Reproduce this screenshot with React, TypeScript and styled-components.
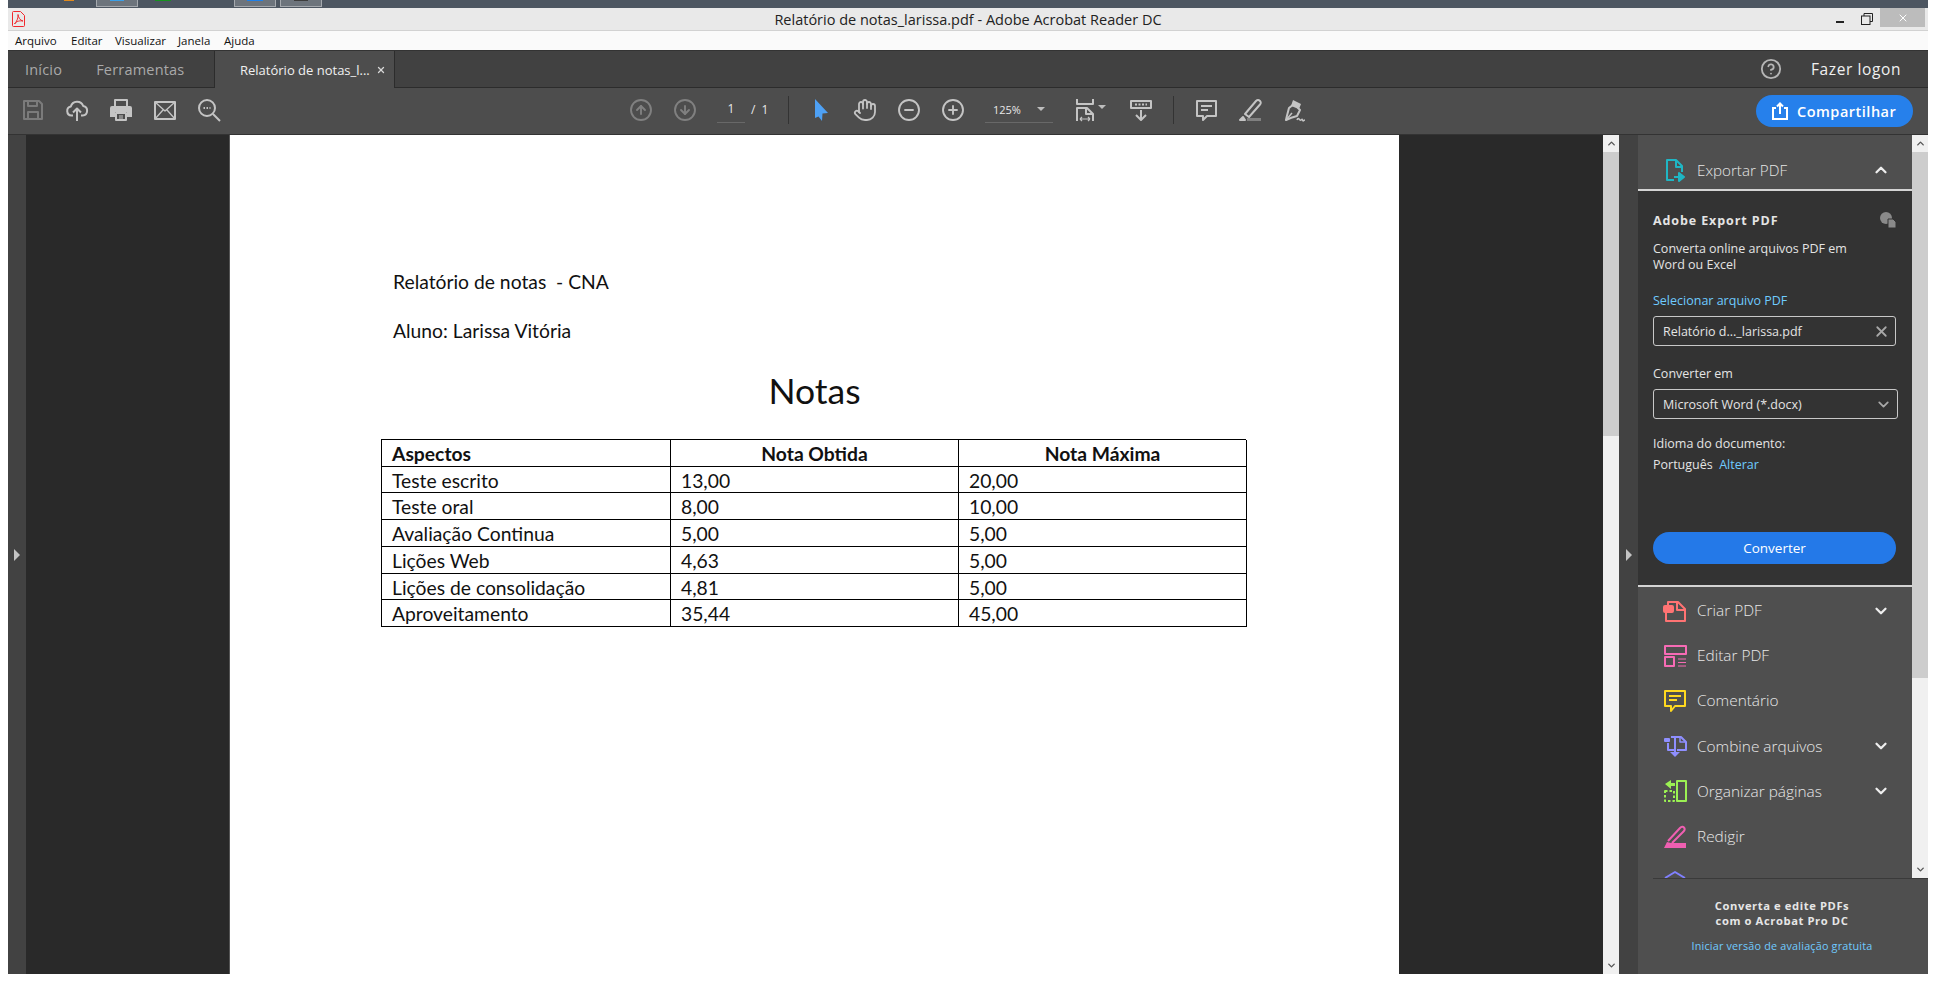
import React from "react";
import styled, { createGlobalStyle } from "styled-components";
import {
  CircleArrowDown,
  CircleArrowUp,
  CircleHelp,
  CircleMinus,
  CirclePlus,
  ChevronDown,
  ChevronUp,
  Hand,
  X,
} from "lucide-react";

const GlobalStyle = createGlobalStyle`
  html, body {
    margin: 0;
    padding: 0;
    background: #fff;
    overflow: hidden;
  }
  * {
    box-sizing: border-box;
  }
`;

const Screen = styled.div`
  width: 1936px;
  height: 982px;
  padding: 0 8px 8px;
  display: flex;
  flex-direction: column;
  font-family: "Open Sans", "Noto Sans", sans-serif;
`;

/* desktop taskbar peeking out above the window */
const TaskStrip = styled.div`
  height: 8px;
  flex: none;
  background: #4d5661;
  display: flex;
  align-items: flex-start;
  overflow: hidden;
`;

const TaskBit = styled.div<{ $left: number; $width: number; $color: string }>`
  margin-left: ${(p) => p.$left}px;
  width: ${(p) => p.$width}px;
  height: 1px;
  background: ${(p) => p.$color};
`;

const TaskButton = styled.div<{ $left: number }>`
  margin-left: ${(p) => p.$left}px;
  width: 42px;
  height: 7px;
  background: #6d747c;
  border: 1px solid #a5a9ae;
  border-top: none;
  display: flex;
  justify-content: center;
`;

const TitleBar = styled.div`
  height: 23px;
  flex: none;
  background: #e9e9e9;
  border-bottom: 1px solid #d2d2d2;
  display: grid;
  grid-template-columns: 1fr auto 1fr;
  align-items: center;
  color: #222;
`;

const AppIcon = styled.div`
  padding-left: 4px;
  display: flex;
  align-items: center;
`;

const TitleText = styled.div`
  font-size: 14.5px;
`;

const WindowControls = styled.div`
  display: flex;
  justify-content: flex-end;
  align-items: flex-start;
  height: 22px;
  padding-right: 3px;
`;

const WinButton = styled.div<{ $close?: boolean }>`
  width: ${(p) => (p.$close ? 45 : 27)}px;
  height: ${(p) => (p.$close ? 19 : 22)}px;
  background: ${(p) => (p.$close ? "#bcbcbc" : "transparent")};
  display: flex;
  align-items: center;
  justify-content: center;
`;

const MenuBar = styled.div`
  height: 20px;
  flex: none;
  background: #fafafa;
  border-bottom: 1px solid #333;
  display: flex;
  align-items: center;
  padding-left: 7px;
  font-size: 11.5px;
  color: #111;
`;

const MenuItem = styled.span<{ $w: number }>`
  width: ${(p) => p.$w}px;
`;

const TabBar = styled.div`
  height: 37px;
  flex: none;
  background: #414141;
  border-bottom: 1px solid #2c2c2c;
  display: flex;
  align-items: stretch;
  color: #f0f0f0;
`;

const HomeTabs = styled.div`
  width: 207px;
  border-right: 1px solid #2c2c2c;
  display: flex;
  align-items: center;
  padding-left: 17px;
  gap: 34px;
  color: #a9a9a9;
  font-size: 14.5px;
  letter-spacing: 0.2px;
`;

const DocTab = styled.div`
  width: 180px;
  margin-bottom: -1px;
  background: #4d4d4d;
  border-right: 1px solid #2c2c2c;
  display: flex;
  align-items: center;
  padding-left: 25px;
  gap: 6px;
  font-size: 13px;
`;

const TabRight = styled.div`
  margin-left: auto;
  display: flex;
  align-items: center;
  padding-right: 27px;
`;

const SignIn = styled.span`
  margin-left: 29px;
  font-size: 15.5px;
  letter-spacing: 0.6px;
  color: #f0f0f0;
`;

const Toolbar = styled.div`
  height: 47px;
  flex: none;
  background: #4d4d4d;
  border-bottom: 1px solid #333;
  display: flex;
  align-items: center;
  padding-left: 3px;
  padding-right: 15px;
  padding-bottom: 3px;
`;

const Tool = styled.div<{ $gap?: number }>`
  width: 44px;
  height: 26px;
  flex: none;
  margin-left: ${(p) => p.$gap ?? 0}px;
  display: flex;
  align-items: center;
  justify-content: center;
  color: #c4c4c4;
  position: relative;
`;

const ToolCaret = styled.span`
  position: absolute;
  right: 1px;
  top: 8px;
  border-left: 4px solid transparent;
  border-right: 4px solid transparent;
  border-top: 4px solid #bdbdbd;
`;

const PageInput = styled.div`
  margin-left: 10px;
  width: 28px;
  height: 26px;
  flex: none;
  border-bottom: 1px solid #686868;
  color: #e8e8e8;
  font-size: 12px;
  text-align: center;
  line-height: 24px;
`;

const PageTotal = styled.div`
  width: 43px;
  flex: none;
  padding-left: 6px;
  color: #e8e8e8;
  font-size: 12px;
  word-spacing: 3px;
`;

const ToolSep = styled.div<{ $gap?: number }>`
  width: 1px;
  height: 28px;
  flex: none;
  margin-left: ${(p) => p.$gap ?? 0}px;
  margin-right: 10px;
  background: #333;
`;

const ZoomBox = styled.div`
  margin-left: 10px;
  width: 68px;
  height: 26px;
  flex: none;
  border-bottom: 1px solid #686868;
  display: flex;
  align-items: center;
  justify-content: space-between;
  padding: 0 8px;
  color: #e8e8e8;
  font-size: 11px;
`;

const Caret = styled.span`
  border-left: 4px solid transparent;
  border-right: 4px solid transparent;
  border-top: 4px solid #bdbdbd;
`;

const ShareButton = styled.div`
  margin-left: auto;
  margin-top: 3px;
  width: 157px;
  height: 32px;
  border-radius: 16px;
  background: #2680eb;
  color: #fff;
  display: flex;
  align-items: center;
  padding-left: 15px;
  gap: 8px;
  font-size: 14.5px;
  font-weight: 600;
  letter-spacing: 0.5px;
`;

const Workspace = styled.div`
  flex: 1;
  min-height: 0;
  display: flex;
`;

const Rail = styled.div<{ $w: number }>`
  width: ${(p) => p.$w}px;
  flex: none;
  background: #424242;
  display: flex;
  align-items: center;
  justify-content: center;
`;

const RailArrow = styled.span`
  border-top: 6px solid transparent;
  border-bottom: 6px solid transparent;
  border-left: 6px solid #c4c4c4;
`;

const DocView = styled.div`
  width: 1577px;
  flex: none;
  background: #292929;
  padding-left: 203px;
  overflow: hidden;
`;

const Page = styled.div`
  width: 1170px;
  height: 100%;
  background: #fff;
  border-left: 1px solid #555;
  padding: 133px 0 0 163px;
  color: #111;
  font-family: Lato, "Open Sans", sans-serif;
`;

const DocLine = styled.div`
  font-size: 19.3px;
  height: 49px;
  line-height: 28px;
`;

const DocTitle = styled.div`
  width: 836px;
  margin-top: 2px;
  height: 71px;
  padding-left: 7px;
  text-align: center;
  font-size: 35.5px;
  line-height: 46px;
`;

const GradeTable = styled.div`
  margin-left: -12px;
  width: 865px;
  display: grid;
  grid-template-columns: 289px 288px 288px;
  grid-auto-rows: 26.71px;
  border-top: 1.5px solid #000;
  border-left: 1.5px solid #000;
  font-size: 19.3px;
`;

const Cell = styled.div<{ $head?: boolean; $center?: boolean }>`
  border-right: 1.5px solid #000;
  border-bottom: 1.5px solid #000;
  padding-left: ${(p) => (p.$center ? 0 : 10)}px;
  line-height: 27px;
  font-weight: ${(p) => (p.$head ? 700 : 400)};
  text-align: ${(p) => (p.$center ? "center" : "left")};
  white-space: nowrap;
`;

const ScrollBar = styled.div<{ $h: number }>`
  width: 16px;
  height: ${(p) => p.$h}px;
  flex: none;
  background: #f0f0f0;
  display: flex;
  flex-direction: column;
  color: #555;
`;

const ScrollButton = styled.div`
  height: 17px;
  flex: none;
  display: flex;
  align-items: center;
  justify-content: center;
`;

const ScrollThumb = styled.div<{ $h: number }>`
  height: ${(p) => p.$h}px;
  background: #cdcdcd;
  flex: none;
`;

const ScrollTrack = styled.div`
  flex: 1;
`;

const ToolsPane = styled.div`
  flex: 1;
  min-width: 0;
  display: flex;
  flex-direction: column;
  background: #4f4f4f;
`;

const PaneTop = styled.div`
  height: 743px;
  flex: none;
  display: flex;
`;

const PaneScroll = styled.div`
  flex: 1;
  min-width: 0;
  overflow: hidden;
`;

const SectionHead = styled.div`
  height: 56px;
  border-bottom: 2px solid #d4d4d4;
  display: flex;
  align-items: center;
  padding: 15px 22px 0 25px;
  color: #e6e6e6;
  font-size: 15.2px;
  font-weight: 300;
`;

const ItemLabel = styled.span`
  margin-left: 10px;
  flex: 1;
`;

const ExportBox = styled.div`
  height: 396px;
  background: #333;
  border-bottom: 2px solid #d4d4d4;
  padding: 20px 15px 0;
  color: #e4e4e4;
  font-size: 12.5px;
  display: flex;
  flex-direction: column;
`;

const ExportTitle = styled.div`
  display: flex;
  justify-content: space-between;
  align-items: center;
  font-size: 12.5px;
  font-weight: 700;
  letter-spacing: 0.9px;
  height: 18px;
  margin-bottom: 12px;
`;

const Para = styled.div<{ $top?: number }>`
  margin-top: ${(p) => p.$top ?? 0}px;
  line-height: 16px;
`;

const LinkText = styled.span`
  color: #6fcbff;
`;

const FieldBox = styled.div<{ $w: number }>`
  width: ${(p) => p.$w}px;
  height: 30px;
  margin-top: 7px;
  flex: none;
  border: 1px solid #c8c8c8;
  border-radius: 3px;
  display: flex;
  align-items: center;
  justify-content: space-between;
  padding: 0 5px 0 9px;
`;

const ConvertButton = styled.div`
  margin-top: 59px;
  width: 243px;
  height: 32px;
  flex: none;
  border-radius: 16px;
  background: #2479e8;
  color: #fff;
  font-size: 13.5px;
  display: flex;
  align-items: center;
  justify-content: center;
`;

const ToolList = styled.div`
  padding: 1px 0 0;
`;

const ToolRow = styled.div`
  height: 45.2px;
  display: flex;
  align-items: center;
  padding: 0 22px 0 25px;
  color: #e8e8e8;
  font-size: 15.4px;
  font-weight: 300;
`;

const Promo = styled.div`
  flex: 1;
  margin-left: 15px;
  border-top: 1px solid #3a3a3a;
  padding: 19px 17px 0 0;
  color: #e6e6e6;
  text-align: center;
  font-size: 11.2px;
  font-weight: 700;
  letter-spacing: 0.6px;
  line-height: 15px;
`;

const PromoLink = styled.div`
  margin-top: 10px;
  color: #6fcbff;
  font-weight: 400;
  font-size: 10.8px;
  letter-spacing: 0.2px;
`;

type GlyphProps = { size?: number; color?: string; children: React.ReactNode };

const Glyph = ({ size = 24, color = "#c4c4c4", children }: GlyphProps) => (
  <svg
    width={size}
    height={size}
    viewBox="0 0 24 24"
    fill="none"
    stroke={color}
    strokeWidth={2}
    strokeLinejoin="round"
  >
    {children}
  </svg>
);

const rows = [
  ["Teste escrito", "13,00", "20,00"],
  ["Teste oral", "8,00", "10,00"],
  ["Avaliação Continua", "5,00", "5,00"],
  ["Lições Web", "4,63", "5,00"],
  ["Lições de consolidação", "4,81", "5,00"],
  ["Aproveitamento", "35,44", "45,00"],
];

const Scroll = ({ height, thumb }: { height: number; thumb: number }) => (
  <ScrollBar $h={height}>
    <ScrollButton>
      <ChevronUp size={11} strokeWidth={3} />
    </ScrollButton>
    <ScrollThumb $h={thumb} />
    <ScrollTrack />
    <ScrollButton>
      <ChevronDown size={11} strokeWidth={3} />
    </ScrollButton>
  </ScrollBar>
);

const tools = [
  {
    label: "Criar PDF",
    more: true,
    icon: (
      <Glyph color="#ff7373">
        <path d="M5 6V3h10l7 7v12H3V14" />
        <path d="M14 3v8h8" />
        <rect x="1" y="7" width="9" height="6" rx="1" fill="#ff7373" />
      </Glyph>
    ),
  },
  {
    label: "Editar PDF",
    icon: (
      <Glyph color="#f76bb5">
        <rect x="2" y="2" width="21" height="8" />
        <rect x="2" y="13" width="9" height="9" />
        <path strokeWidth={1} d="M15 15h8M15 18.500h8M15 22h8" />
      </Glyph>
    ),
  },
  {
    label: "Comentário",
    icon: (
      <Glyph color="#ffd91f">
        <path d="M2 2h20v15H12l-4 5v-5H2z" />
        <path d="M6 7h12M6 11h8" />
      </Glyph>
    ),
  },
  {
    label: "Combine arquivos",
    more: true,
    icon: (
      <Glyph color="#8f8fff">
        <path d="M5 9v7h7V3H8" />
        <path d="M12 3h6l5 5v8H14" />
        <path d="M17 3v5h6" strokeWidth={1.500} />
        <path d="M12 13v6" />
        <path d="M7 18h10l-5 5z" fill="#8f8fff" stroke="none" />
        <rect x="1" y="4" width="6" height="4" rx="1" fill="#8f8fff" stroke="none" />
      </Glyph>
    ),
  },
  {
    label: "Organizar páginas",
    more: true,
    icon: (
      <Glyph color="#9bf153">
        <rect x="14" y="2" width="9" height="20" />
        <path d="M2 12h9v10H2z" strokeDasharray="2.500 2" />
        <path d="M2 5l6-4v3h4v3H8v3z" fill="#9bf153" stroke="none" />
      </Glyph>
    ),
  },
  {
    label: "Redigir",
    icon: (
      <Glyph color="#ef5fb1">
        <path d="M5 16L17 3c1.500-1.500 3-1.500 4-.5s1 2.500-.5 4L9 18" />
        <path d="M1 23l3-6 4 1h15v5z" fill="#ef5fb1" stroke="none" />
      </Glyph>
    ),
  },
  {
    label: "",
    icon: (
      <Glyph color="#8080ff">
        <path d="M2 8l10-6 10 6" />
      </Glyph>
    ),
  },
];

const App = () => {
  return (
    <Screen>
      <GlobalStyle />
      <TaskStrip>
        <TaskBit $left={56} $width={10} $color="#e08a1e" />
        <TaskButton $left={22}>
          <TaskBit $left={0} $width={14} $color="#3aa0e8" />
        </TaskButton>
        <TaskBit $left={17} $width={16} $color="#17921f" />
        <TaskButton $left={63}>
          <TaskBit $left={0} $width={16} $color="#1f80e8" />
        </TaskButton>
        <TaskButton $left={4}>
          <TaskBit $left={0} $width={14} $color="#3d3d3d" />
        </TaskButton>
      </TaskStrip>
      <TitleBar>
        <AppIcon>
          <svg width="13" height="16" viewBox="0 0 13 16" fill="none" stroke="#f0282d">
            <path d="M1.500.5h7l4 4v10a1 1 0 0 1-1 1h-10a1 1 0 0 1-1-1v-13a1 1 0 0 1 1-1z" />
            <path d="M6 3.500c.5 3 2 6 5 6.500-3-.5-6.500 0-8.500 3C4.500 11 6.500 7 6 3.500z" />
          </svg>
        </AppIcon>
        <TitleText>Relatório de notas_larissa.pdf - Adobe Acrobat Reader DC</TitleText>
        <WindowControls>
          <WinButton>
            <svg width="10" height="10" viewBox="0 0 10 10">
              <rect x="1" y="7" width="8" height="2" fill="#222" />
            </svg>
          </WinButton>
          <WinButton>
            <svg width="12" height="12" viewBox="0 0 12 12" fill="none" stroke="#222">
              <rect x=".5" y="3" width="8.500" height="8.500" />
              <path d="M3 3V.5h8.500V8.500H9" />
            </svg>
          </WinButton>
          <WinButton $close>
            <X size={12} color="#fff" strokeWidth={2} />
          </WinButton>
        </WindowControls>
      </TitleBar>
      <MenuBar>
        <MenuItem $w={56}>Arquivo</MenuItem>
        <MenuItem $w={44}>Editar</MenuItem>
        <MenuItem $w={63}>Visualizar</MenuItem>
        <MenuItem $w={46}>Janela</MenuItem>
        <MenuItem $w={40}>Ajuda</MenuItem>
      </MenuBar>
      <TabBar>
        <HomeTabs>
          <span>Início</span>
          <span>Ferramentas</span>
        </HomeTabs>
        <DocTab>
          <span>Relatório de notas_l...</span>
          <X size={10} color="#d8d8d8" strokeWidth={3} />
        </DocTab>
        <TabRight>
          <CircleHelp size={22} color="#b5b5b5" strokeWidth={2} />
          <SignIn>Fazer logon</SignIn>
        </TabRight>
      </TabBar>
      <Toolbar>
        <Tool>
          <Glyph color="#7b7b7b">
            <path d="M3 3h15l3 3v15H3z" />
            <path d="M7 3v5h9V3M7 21v-7h10v7" />
          </Glyph>
        </Tool>
        <Tool>
          <Glyph>
            <path d="M8 17.500H6.500a4.500 4.500 0 0 1-.7-8.900A6.500 6.500 0 0 1 18.200 8a4.800 4.800 0 0 1-.5 9.500H16" />
            <path d="M12 23V11M8 14.500l4-4 4 4" />
          </Glyph>
        </Tool>
        <Tool>
          <Glyph>
            <path d="M6 8V2h12v6" />
            <path
              fill="#c4c4c4"
              stroke="none"
              d="M3 8h18a2 2 0 0 1 2 2v9h-5v-5H6v5H1v-9a2 2 0 0 1 2-2z"
            />
            <path d="M7 15h10v7H7z" />
            <path strokeWidth={1.200} d="M10 18h4M10 20h4" />
          </Glyph>
        </Tool>
        <Tool>
          <Glyph>
            <rect x="2" y="4" width="20" height="17" />
            <path strokeWidth={1.300} d="M2 4l10 9 10-9M2 21l8-9M22 21l-8-9" />
          </Glyph>
        </Tool>
        <Tool>
          <Glyph>
            <circle cx="10" cy="10" r="8" />
            <path d="M16 16l7 7" />
            <path strokeWidth={2} strokeDasharray="1.500 1.500" d="M6.500 10h7" />
          </Glyph>
        </Tool>
        <Tool $gap={388}>
          <CircleArrowUp size={24} color="#808080" strokeWidth={1.900} />
        </Tool>
        <Tool>
          <CircleArrowDown size={24} color="#808080" strokeWidth={1.900} />
        </Tool>
        <PageInput>1</PageInput>
        <PageTotal>/ 1</PageTotal>
        <ToolSep />
        <Tool>
          <svg width="24" height="24" viewBox="0 0 24 24" fill="#4ea1f5">
            <path d="M6 1l13 14-5.500.5L13 23l-3.500-4.500L6 20z" />
          </svg>
        </Tool>
        <Tool>
          <Hand size={24} strokeWidth={1.800} />
        </Tool>
        <Tool>
          <CircleMinus size={24} strokeWidth={1.900} />
        </Tool>
        <Tool>
          <CirclePlus size={24} strokeWidth={1.900} />
        </Tool>
        <ZoomBox>
          <span>125%</span>
          <Caret />
        </ZoomBox>
        <Tool $gap={10}>
          <Glyph>
            <path d="M4 1v5h16V1" />
            <path d="M4 23V10h10l6 6v7" />
            <path d="M13 10v6h7" />
            <path strokeWidth={1.200} d="M7 21h10M7 21l2-2M7 21l2 2M17 21l-2-2M17 21l-2 2" />
          </Glyph>
          <ToolCaret />
        </Tool>
        <Tool $gap={12}>
          <Glyph>
            <rect x="2" y="3" width="20" height="7" />
            <path strokeDasharray="2 1.500" d="M6 6.500h12" />
            <path d="M12 12v10M7 17l5 5 5-5" />
          </Glyph>
        </Tool>
        <ToolSep $gap={10} />
        <Tool>
          <Glyph>
            <path d="M3 3h19v15H13l-4 4v-4H3z" />
            <path d="M7 8h11M7 12h7" />
          </Glyph>
        </Tool>
        <Tool>
          <Glyph>
            <path d="M7 16L18 3c1.500-1.500 3-1 4 0s1 2.500 0 3.500L11 19z" />
            <path d="M2 22l3-3 2 3z" fill="#c4c4c4" />
            <path d="M9 21.500h14" stroke="#808080" strokeWidth={3} />
          </Glyph>
        </Tool>
        <Tool>
          <Glyph>
            <path d="M12 6l6 6-3 6c-4 1-7 2-11 4 1-5 2-8 3-12z" />
            <path d="M4 22l6-7" strokeWidth={1.500} />
            <path d="M11 2l-2 6 8 3 2-5z" fill="#c4c4c4" stroke="none" />
            <path strokeWidth={1.500} d="M15 22c1-3 2-1 3 0s2-2 2.500 0 1.500 0 2.500 0" />
          </Glyph>
        </Tool>
        <ShareButton>
          <svg width="18" height="18" viewBox="0 0 18 18" fill="none" stroke="#fff" strokeWidth={2}>
            <path d="M5 6H2v11h14V6h-3" />
            <path d="M9 12V2M6 4.500L9 1.500l3 3" />
          </svg>
          Compartilhar
        </ShareButton>
      </Toolbar>
      <Workspace>
        <Rail $w={18}>
          <RailArrow />
        </Rail>
        <DocView>
          <Page>
            <DocLine>Relatório de notas&nbsp; - CNA</DocLine>
            <DocLine>Aluno: Larissa Vitória</DocLine>
            <DocTitle>Notas</DocTitle>
            <GradeTable>
              <Cell $head>Aspectos</Cell>
              <Cell $head $center>Nota Obtida</Cell>
              <Cell $head $center>Nota Máxima</Cell>
              {rows.map((row) =>
                row.map((value, i) => <Cell key={row[0] + i}>{value}</Cell>)
              )}
            </GradeTable>
          </Page>
        </DocView>
        <Scroll height={839} thumb={284} />
        <Rail $w={19}>
          <RailArrow />
        </Rail>
        <ToolsPane>
          <PaneTop>
            <PaneScroll>
              <SectionHead>
                <Glyph color="#1fb6c4">
                  <path d="M11 22H4V2h9l6 6v6" />
                  <path d="M13 2v7h6" />
                  <path d="M11 19h8M16 15l5 4-5 4z" fill="#1fb6c4" />
                </Glyph>
                <ItemLabel>Exportar PDF</ItemLabel>
                <ChevronUp size={18} color="#eee" strokeWidth={3} />
              </SectionHead>
              <ExportBox>
                <ExportTitle>
                  Adobe Export PDF
                  <svg width="18" height="18" viewBox="0 0 18 18" fill="#8a8a8a">
                    <circle cx="7" cy="7" r="6" />
                    <path d="M9 8h5l3 3v6H9z" stroke="#333" />
                  </svg>
                </ExportTitle>
                <Para>
                  Converta online arquivos PDF em
                  <br />
                  Word ou Excel
                </Para>
                <Para $top={20}>
                  <LinkText>Selecionar arquivo PDF</LinkText>
                </Para>
                <FieldBox $w={243}>
                  Relatório d..._larissa.pdf
                  <X size={17} color="#a8a8a8" strokeWidth={2.500} />
                </FieldBox>
                <Para $top={20}>Converter em</Para>
                <FieldBox $w={245}>
                  Microsoft Word (*.docx)
                  <ChevronDown size={17} color="#a8a8a8" strokeWidth={2.500} />
                </FieldBox>
                <Para $top={17}>Idioma do documento:</Para>
                <Para $top={5}>
                  Português&nbsp; <LinkText>Alterar</LinkText>
                </Para>
                <ConvertButton>Converter</ConvertButton>
              </ExportBox>
              <ToolList>
                {tools.map((tool) => (
                  <ToolRow key={tool.label}>
                    {tool.icon}
                    <ItemLabel>{tool.label}</ItemLabel>
                    {tool.more && <ChevronDown size={18} color="#eee" strokeWidth={3} />}
                  </ToolRow>
                ))}
              </ToolList>
            </PaneScroll>
            <Scroll height={743} thumb={526} />
          </PaneTop>
          <Promo>
            Converta e edite PDFs
            <br />
            com o Acrobat Pro DC
            <PromoLink>Iniciar versão de avaliação gratuita</PromoLink>
          </Promo>
        </ToolsPane>
      </Workspace>
    </Screen>
  );
};

export default App;
